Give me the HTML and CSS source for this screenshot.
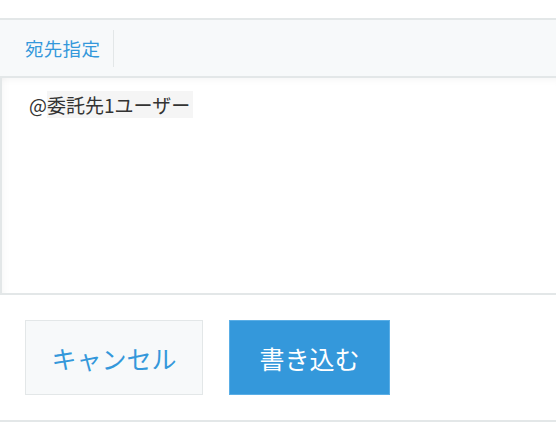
FILE: index.html
```html
<!DOCTYPE html>
<html lang="ja">
<head>
  <meta charset="utf-8" />
  <meta name="viewport" content="width=device-width, initial-scale=1" />
  <title>コメント</title>
  <link rel="stylesheet" href="styles.css">
</head>
<body>
  <form class="comment-form">
    <div class="toolbar">
      <button type="button" class="mention-btn">宛先指定</button>
      <span class="divider"></span>
    </div>
    <div class="editor" contenteditable="true">@<span class="mention">委託先1ユーザー</span></div>
    <div class="actions">
      <button type="button" class="btn btn-cancel">キャンセル</button>
      <button type="submit" class="btn btn-submit">書き込む</button>
    </div>
  </form>
</body>
</html>
```
FILE: styles.css
```css
:root {
  --blue: #3498db;
  --line: #e3e7e8;
  --panel: #f7f9fa;
  --text: #333;
}
* { box-sizing: border-box; }
html, body {
  margin: 0;
  background: #fff;
  font-family: "Noto Sans CJK JP", "Noto Sans", sans-serif;
  color: var(--text);
}
.comment-form {
  margin-top: 18px;
  border-bottom: 2px solid var(--line);
}
.toolbar {
  display: flex;
  align-items: center;
  height: 60px;
  padding-left: 25px;
  background: var(--panel);
  border-top: 2px solid var(--line);
  border-bottom: 2px solid var(--line);
}
.mention-btn {
  border: 0;
  background: none;
  padding: 0;
  font: inherit;
  font-size: 18.5px;
  letter-spacing: 0.3px;
  color: var(--blue);
  cursor: pointer;
}
.divider {
  width: 1px;
  height: 37px;
  margin-left: 13px;
  background: var(--line);
}
.editor {
  height: 217px;
  padding: 14px 27px;
  font-size: 19px;
  line-height: 26px;
  border-left: 2px solid var(--line);
  border-bottom: 2px solid var(--line);
  box-shadow: inset 0 8px 10px -8px rgba(0, 0, 0, 0.06), inset 8px 0 10px -8px rgba(0, 0, 0, 0.05);
  outline: none;
}
.mention {
  background: #f5f5f5;
  padding-right: 3px;
}
.actions {
  display: flex;
  gap: 26px;
  height: 125px;
  padding: 25px 25px 0;
}
.btn {
  height: 75px;
  border: 1px solid var(--line);
  font: inherit;
  font-size: 25px;
  cursor: pointer;
}
.btn-cancel {
  width: 178px;
  background: var(--panel);
  color: var(--blue);
}
.btn-submit {
  width: 161px;
  background: var(--blue);
  border-color: #5aaee6;
  color: #fff;
}
```
